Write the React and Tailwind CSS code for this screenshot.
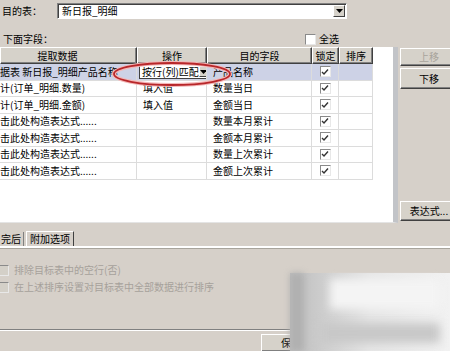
const rows = [
  { src: '据表 新日报_明细产品名称', op: 'combo', dst: '产品名称', sel: true },
  { src: '计(订单_明细.数量)', op: '填入值', dst: '数量当日' },
  { src: '计(订单_明细.金额)', op: '填入值', dst: '金额当日' },
  { src: '击此处构造表达式......', op: '', dst: '数量本月累计' },
  { src: '击此处构造表达式......', op: '', dst: '金额本月累计' },
  { src: '击此处构造表达式......', op: '', dst: '数量上次累计' },
  { src: '击此处构造表达式......', op: '', dst: '金额上次累计' },
]

const Check = ({ checked, disabled }) => (
  <div
    className={`w-[11px] h-[11px] border border-[#8a8a8a] border-b-[#e8e8e8] border-r-[#e8e8e8] flex items-center justify-center ${
      disabled ? 'bg-[#d4d0c8]' : 'bg-white'
    }`}
  >
    {checked && (
      <svg width="8" height="8" viewBox="0 0 8 8">
        <path d="M1 4 L3 6 L7 1.5" stroke="#333" strokeWidth="1.4" fill="none" />
      </svg>
    )}
  </div>
)

const Arrow = () => (
  <svg width="7" height="4" viewBox="0 0 7 4">
    <path d="M0 0 H7 L3.5 4 Z" fill="#000" />
  </svg>
)

const Btn = ({ children, className = '', disabled }) => (
  <div
    className={`border border-white border-b-[#404040] border-r-[#404040] shadow-[inset_-1px_-1px_#808080] bg-[#d6d2ca] flex items-center justify-center ${
      disabled ? 'text-[#a8a49c]' : 'text-black'
    } ${className}`}
  >
    {children}
  </div>
)

const Cell = ({ w, children, className = '' }) => (
  <div
    className={`h-full shrink-0 border-r border-b border-[#dcdcdc] flex items-center overflow-hidden whitespace-nowrap ${className}`}
    style={{ width: w }}
  >
    {children}
  </div>
)

const Head = ({ w, children, className = '' }) => (
  <div
    className={`h-full shrink-0 flex items-center justify-center bg-[#d6d2ca] border border-white border-b-[#404040] border-r-[#404040] shadow-[inset_-1px_-1px_#808080] ${className}`}
    style={{ width: w }}
  >
    {children}
  </div>
)

export default function App() {
  return (
    <div className="relative w-[450px] h-[351px] overflow-hidden bg-[#d6d0c9] text-[10px] text-black font-['Noto_Sans_CJK_SC',sans-serif] leading-none">
      {/* target table picker */}
      <div className="flex items-center pt-[3px] h-[19px]">
        <div className="w-[57px] shrink-0 pl-[2px] whitespace-nowrap">目的表：</div>
        <div className="w-[290px] h-[16px] bg-white border border-[#808080] border-b-white border-r-white shadow-[inset_1px_1px_#404040] flex items-center pl-[4px]">
          <span className="flex-1">新日报_明细</span>
          <div className="w-[12px] h-[12px] mr-[1px] flex items-center justify-center bg-[#d6d2ca] border border-white border-b-[#404040] border-r-[#404040]">
            <Arrow />
          </div>
        </div>
      </div>

      <div className="flex items-center mt-[14px] h-[12px]">
        <div className="w-[305px] pl-[3px] whitespace-nowrap">下面字段：</div>
        <div className="flex items-center gap-[3px]">
          <Check />
          <span>全选</span>
        </div>
      </div>

      {/* list + side buttons */}
      <div className="flex mt-[2px]">
        <div className="w-[398px] h-[176px] bg-white border-r-[5px] border-r-[#c2c4c8] border-b border-b-[#e4e4e4] shrink-0">
          <div className="flex h-[17px] w-[373px]">
            <Head w={137} className="pr-[22px]">提取数据</Head>
            <Head w={70}>操作</Head>
            <Head w={105}>目的字段</Head>
            <Head w={27}>锁定</Head>
            <Head w={34}>排序</Head>
          </div>
          {rows.map((r, i) => (
            <div
              key={i}
              className={`flex h-[16.5px] w-[373px] ${r.sel ? 'bg-[#cdd2e6]' : ''}`}
            >
              <Cell w={137}>{r.src}</Cell>
              <Cell w={70} className="pl-[2px]">
                {r.op === 'combo' ? (
                  <div className="w-[68px] h-[15px] bg-white border border-[#404040] flex items-center pl-[2px]">
                    <span className="flex-1">按行(列)匹配</span>
                    <div className="w-[10px] h-[11px] mr-[1px] flex items-center justify-center bg-[#d6d2ca] border border-white border-b-[#404040] border-r-[#404040]">
                      <Arrow />
                    </div>
                  </div>
                ) : (
                  <span className="pl-[4px]">{r.op}</span>
                )}
              </Cell>
              <Cell w={105} className="pl-[6px]">
                {r.dst}
              </Cell>
              <Cell w={27} className="justify-center">
                <Check checked />
              </Cell>
              <Cell w={34} />
            </div>
          ))}
        </div>
        <div className="flex flex-col pl-[2px] w-[60px] shrink-0">
          <Btn disabled className="h-[18px] mt-[1px]">上移</Btn>
          <Btn className="h-[21px] mt-[2px]">下移</Btn>
          <Btn className="h-[20px] mt-[112px]">表达式...</Btn>
        </div>
      </div>

      {/* tabs */}
      <div className="flex items-end mt-[9px] h-[16px] border-b-2 border-b-white shadow-[0_1px_#a8a49c]">
        <div className="h-[14px] pl-[1px] pr-[2px] flex items-center border-r border-[#808080]">
          完后
        </div>
        <div className="h-[15px] px-[3px] ml-[2px] flex items-center border border-white border-r-[#404040] border-b-0">
          附加选项
        </div>
      </div>

      {/* options */}
      <div className="flex flex-col gap-[7px] mt-[17px] text-[#a6a19b]">
        <div className="flex items-center gap-[5px] -ml-[2px] h-[10px]">
          <Check disabled />
          <span>排除目标表中的空行(否)</span>
        </div>
        <div className="flex items-center gap-[5px] -ml-[2px] h-[10px]">
          <Check disabled />
          <span>在上述排序设置对目标表中全部数据进行排序</span>
        </div>
      </div>

      {/* bottom bar */}
      <div className="mt-[37px] w-[300px] border-t border-t-[#808080] border-b border-b-white" />
      <div className="flex mt-[3px] pl-[261px]">
        <Btn className="w-[60px] h-[18px]">保存</Btn>
      </div>

      {/* blurred watermark */}
      <div className="absolute left-[290px] top-[273px] w-[160px] h-[78px] bg-gradient-to-r from-[#bdbdbd] via-[#e6e6e6] to-[#f2f2f2]">
        <div className="absolute left-[40px] top-[6px] w-[110px] h-[30px] bg-[#f4f4f4] blur-[4px]" />
        <div className="absolute left-[0px] top-[0px] w-[14px] h-[78px] bg-[#b0b0b0] blur-[3px]" />
        <div className="absolute left-[30px] top-[50px] w-[120px] h-[20px] bg-[#c8c8c8] blur-[5px]" />
      </div>

      {/* red annotation ellipse */}
      <svg className="absolute left-[110px] top-[60px]" width="124" height="30" viewBox="0 0 124 30">
        <ellipse cx="62" cy="14" rx="58" ry="11" fill="none" stroke="#f3b7b7" strokeWidth="4" />
        <ellipse cx="62" cy="14" rx="58" ry="11" fill="none" stroke="#b8272a" strokeWidth="1.8" />
      </svg>
    </div>
  )
}
